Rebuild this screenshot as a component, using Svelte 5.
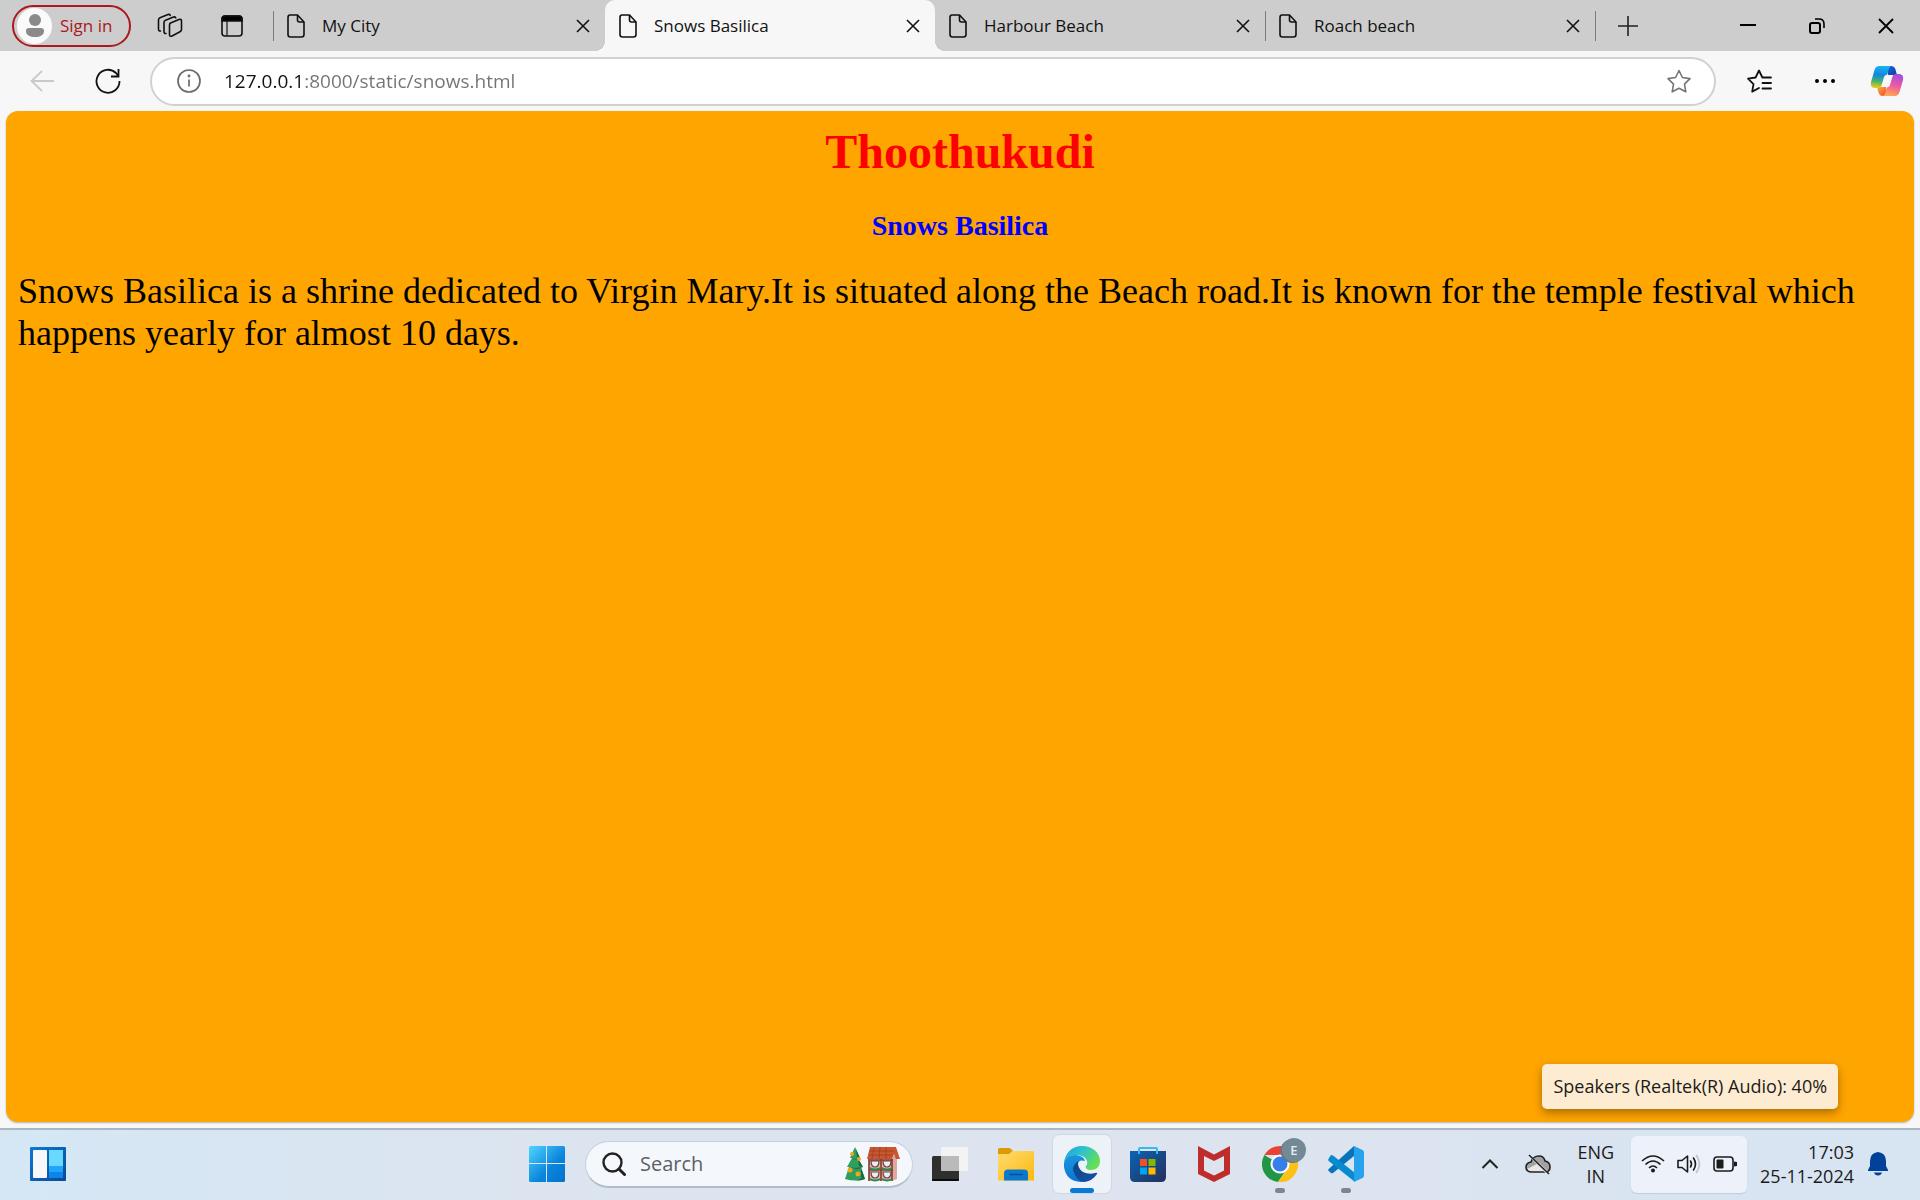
<script lang="ts">
  type Tab = { title: string; active?: boolean; ruled?: boolean };
  const tabs: Tab[] = [
    { title: 'My City', ruled: true },
    { title: 'Snows Basilica', active: true },
    { title: 'Harbour Beach' },
    { title: 'Roach beach', ruled: true },
  ];
  let url = $state('127.0.0.1:8000/static/snows.html');
  let query = $state('');
</script>

<div class="desktop">
  <header class="tabbar">
    <button class="signin">
      <span class="avatar">
        <svg width="20" height="24" viewBox="0 0 20 24" fill="#8a8a8a"><ellipse cx="10" cy="6" rx="6" ry="6" /><path d="M4 14h12c2 0 3 1 3 3 0 4-4 6-9 6s-9-2-9-6c0-2 1-3 3-3z" /></svg>
      </span>
      Sign in
    </button>
    <button class="tool workspaces" aria-label="Workspaces">
      <svg width="26" height="26" viewBox="0 0 26 26" fill="none" stroke="#111" stroke-width="1.6" stroke-linejoin="round" stroke-linecap="round">
        <path d="M13.500 10l8.500-3.500q2.500-.8 2.500 1.500v8.500q0 1.500-1.500 2.200l-8 4.300q-2.500 1-2.500-1.500v-9.500q0-1.400 1-2z" />
        <path d="M9 20.500q-2 .3-2-2v-9q0-1.500 1.500-2.200l8-3.300q1.500-.5 2.300.8" />
        <path d="M3.500 18q-2 .2-2-2V7q0-1.500 1.500-2.200l8-3.300q1.500-.5 2.300.8" />
      </svg>
    </button>
    <button class="tool" aria-label="Tab actions menu">
      <svg width="22" height="22" viewBox="0 0 22 22" fill="none" stroke="#111" stroke-width="1.6">
        <rect x="1" y="1" width="20" height="20" rx="3" /><path d="M1 6V4q0-3 3-3h14q3 0 3 3v2z" fill="#000" /><path d="M6 6v15" stroke-width="1.2" />
      </svg>
    </button>
    <nav class="tabs" aria-label="Tabs">
      {#each tabs as tab}
        <div class="tab" class:active={tab.active} class:ruled={tab.ruled}>
          <button class="tab-title">
            <svg width="18" height="24" viewBox="0 0 18 24" fill="none" stroke="#111" stroke-width="1.6" stroke-linejoin="round"><path d="M3 1h7.500l6.500 7v12.500q0 2.500-2.500 2.500H3.500Q1 23 1 20.500v-17Q1 1 3 1z" /><path d="M10.500 1v5q0 2 2 2H17" /></svg>
            <span>{tab.title}</span>
          </button>
          <button class="close" aria-label="Close {tab.title}">
            <svg width="14" height="14" viewBox="0 0 14 14" stroke="#111" stroke-width="1.6"><path d="M1 1l12 12M13 1L1 13" /></svg>
          </button>
        </div>
      {/each}
      <button class="newtab" aria-label="New tab">
        <svg width="22" height="22" viewBox="0 0 22 22" stroke="#222" stroke-width="1.6"><path d="M11 1v20M1 11h20" /></svg>
      </button>
    </nav>
    <div class="window-controls">
      <button aria-label="Minimize"><svg width="16" height="16" viewBox="0 0 16 16" stroke="#000" stroke-width="2"><path d="M0 7h16" /></svg></button>
      <button aria-label="Restore"><svg width="16" height="16" viewBox="0 0 16 16" fill="none" stroke="#000" stroke-width="2"><rect x="1" y="5" width="10" height="10" rx="2" /><path d="M6 1h4q5 0 5 5v4" stroke-width="1.6" /></svg></button>
      <button aria-label="Close"><svg width="16" height="16" viewBox="0 0 16 16" stroke="#000" stroke-width="1.8"><path d="M1 1l14 14M15 1L1 15" /></svg></button>
    </div>
  </header>

  <div class="toolbar">
    <button aria-label="Back"><svg width="24" height="22" viewBox="0 0 24 22" fill="none" stroke="#c9c9c9" stroke-width="1.8"><path d="M24 11H2M12 1L1.500 11 12 21" /></svg></button>
    <button aria-label="Refresh"><svg width="26" height="26" viewBox="0 0 26 26" fill="none" stroke="#111" stroke-width="1.800"><path d="M24.500 13A11.500 11.500 0 1 1 21 5l2 2.500M23.500 1v7.500h-7.500" /></svg></button>
    <div class="address">
      <svg width="24" height="24" viewBox="0 0 24 24" fill="none" stroke="#6b6b6b" stroke-width="1.7"><circle cx="12" cy="12" r="11" /><path d="M12 10.500v7" /><circle cx="12" cy="7" r=".6" fill="#6b6b6b" /></svg>
      <input type="text" aria-label="Address" bind:value={url} />
      <button aria-label="Add to favorites"><svg width="26" height="24" viewBox="0 0 26 24" fill="none" stroke="#767676" stroke-width="1.6" stroke-linejoin="round"><path d="M13 1.500l3.400 7 7.600 1.100-5.500 5.500 1.300 7.700-6.800-3.600-6.800 3.600 1.300-7.700L2 9.600l7.600-1.100z" /></svg></button>
    </div>
    <button aria-label="Favorites"><svg width="26" height="24" viewBox="0 0 26 24" fill="none" stroke="#111" stroke-width="1.8" stroke-linejoin="round" stroke-linecap="round"><path d="M13 19l-6.800 3.600 1.300-7.500L2 9.600l7.600-1.100 3.400-7 3.400 7M16.400 8.500H25M16.500 14H25M16.500 19.500H25" /></svg></button>
    <button aria-label="Settings and more"><svg width="22" height="6" viewBox="0 0 22 6"><circle cx="3" cy="3" r="2" /><circle cx="11" cy="3" r="2" /><circle cx="19" cy="3" r="2" /></svg></button>
    <button class="copilot" aria-label="Copilot">
      <svg width="34" height="32" viewBox="0 0 34 32">
        <defs>
          <linearGradient id="cpA" x1=".4" y1="0" x2=".3" y2="1"><stop offset="0" stop-color="#18b3f0" /><stop offset=".4" stop-color="#1686dd" /><stop offset=".7" stop-color="#46b36c" /><stop offset="1" stop-color="#f3cc16" /></linearGradient>
          <linearGradient id="cpB" x1=".7" y1="0" x2=".4" y2="1"><stop offset="0" stop-color="#a04be8" /><stop offset=".5" stop-color="#ee5aa0" /><stop offset="1" stop-color="#ffa552" /></linearGradient>
          <linearGradient id="cpC" x1="0" y1="0" x2="1" y2="1"><stop offset="0" stop-color="#1667d8" /><stop offset="1" stop-color="#123da8" /></linearGradient>
          <linearGradient id="cpD" x1="0" y1="0" x2="1" y2="1"><stop offset="0" stop-color="#ffb03a" /><stop offset="1" stop-color="#ee4432" /></linearGradient>
        </defs>
        <path d="M17 1h4q3.500 0 4.500 3.500L27 10h-9z" fill="url(#cpC)" />
        <path d="M17 31h-4q-3.500 0-4.500-3.500L7 22h9z" fill="url(#cpD)" />
        <path d="M9.500 1H22q-2.500 0-3.500 4l-1.300 4.500q-2.700.5-3.200 2.500l-2.500 8.500q-.6 2.500-4 2.500H5q-5 0-4-6L4.500 5q1-4 5-4z" fill="url(#cpA)" />
        <path d="M24.500 31H12q2.500 0 3.500-4l1.300-4.500q2.700-.5 3.200-2.500l2.500-8.500q.6-2.500 4-2.500H29q5 0 4 6l-3.500 12q-1 4-5 4z" fill="url(#cpB)" />
      </svg>
    </button>
  </div>

  <main class="page">
    <h1>Thoothukudi</h1>
    <h2>Snows Basilica</h2>
    <p>Snows Basilica is a shrine dedicated to Virgin Mary.It is situated along the Beach road.It is known for the temple festival which happens yearly for almost 10 days.</p>
  </main>

  <footer class="taskbar">
    <div class="widgets">
      <button aria-label="Widgets">
        <svg width="36" height="34" viewBox="0 0 36 34">
          <defs><linearGradient id="wd" x1="0" y1="0" x2="1" y2="1"><stop offset="0" stop-color="#0a7ad6" /><stop offset="1" stop-color="#0b4a92" /></linearGradient></defs>
          <rect width="36" height="34" rx="1" fill="url(#wd)" /><rect x="3" y="3" width="14" height="28" rx="1" fill="#f8f8f8" /><rect x="19" y="3" width="14" height="16" fill="#68d9ff" /><rect x="19" y="19" width="14" height="6" fill="#1fa6fb" /><rect x="19" y="25" width="14" height="6" fill="#0a86ea" />
        </svg>
      </button>
    </div>

    <div class="apps">
      <button class="app start" aria-label="Start">
        <svg width="36" height="36" viewBox="0 0 36 36">
          <defs><linearGradient id="win" x1="0" y1="0" x2="36" y2="36" gradientUnits="userSpaceOnUse"><stop offset="0" stop-color="#50d5ff" /><stop offset=".6" stop-color="#0a85dc" /><stop offset="1" stop-color="#0273cd" /></linearGradient></defs>
          <path fill="url(#win)" d="M1.500 0H17v17H0V1.500Q0 0 1.500 0zM18 0h16.500Q36 0 36 1.500V17H18zM0 18h17v18H1.500Q0 36 0 34.500zM18 18h18v16.500q0 1.500-1.500 1.500H18z" />
        </svg>
      </button>
      <label class="search">
        <svg width="24" height="24" viewBox="0 0 24 24" fill="none" stroke="#222" stroke-width="2.4" stroke-linecap="round"><circle cx="10.500" cy="10.500" r="9" /><path d="M17 17l5.500 5.500" stroke-width="3" /></svg>
        <input type="search" placeholder="Search" aria-label="Search" bind:value={query} />
        <svg width="56" height="36" viewBox="0 0 56 36">
          <path d="M11 1l5 11h-2l5 9h-2l4 12q-10 3-20 0l4-12H3l5-9H6z" fill="#2f9e5f" />
          <path d="M16 12q-4 3-8 0l3 1zM19 21q-6 4-12 0l4 1zM21 33q-5 2-10 1.500 6-1 8-4zM12 3l4 9-3-1zM14 13l5 8-4-1zM17 22l4 11-4-2z" fill="#176a43" />
          <g fill="#f2a51e"><circle cx="8" cy="8" r="2" /><circle cx="15" cy="13" r="2" /><circle cx="6" cy="24" r="2.500" /><circle cx="14" cy="28" r="2.500" /></g>
          <path d="M48 12l5-7v28l-5 2z" fill="#d8aaa0" /><path d="M25 12h24v23H25z" fill="#dcb8ad" />
          <path d="M25 13v22M37 13v22M48 13v22M25 24h24M25 14h24" stroke="#85382c" stroke-width="1.6" />
          <path d="M26 1h26l4 12h-4l-2-5-2 5H23z" fill="#c65730" /><path d="M26 5h24M25 9h24M30 1l-2 12M36 1l-1 12M42 1v12" stroke="#a13e22" stroke-width=".8" />
          <g fill="#e2eeff" stroke="#7c3a32" stroke-width="1.2"><path d="M27 15h8q0 6-4 6t-4-6zM39 15h8q0 6-4 6t-4-6zM27 26h8q0 6-4 6t-4-6zM39 26h8q0 6-4 6t-4-6z" /></g>
          <path d="M26 22q5 3 10 0M38 22q5 3 10 0M26 33q5 3 10 0M38 33q5 3 10 0" stroke="#278b4a" stroke-width="2" fill="none" />
        </svg>
      </label>
      <button class="app" aria-label="Task view">
        <svg width="36" height="36" viewBox="0 0 36 36"><rect x="0" y="10" width="27" height="25" rx="1.500" fill="#2f2f2f" /><path d="M0 34h27" stroke="#000" stroke-width="1.5" /><rect x="9" y="1" width="27" height="24" rx="1.500" fill="#f3f3f3" /><path d="M9 10h18v15H10.500Q9 25 9 23.500z" fill="#bababa" /></svg>
      </button>
      <button class="app" aria-label="File Explorer">
        <svg width="36" height="36" viewBox="0 0 36 36">
          <defs><linearGradient id="fo" x1="0" y1="0" x2="1" y2="1"><stop offset="0" stop-color="#ffdc70" /><stop offset="1" stop-color="#fbb90f" /></linearGradient></defs>
          <path d="M1.500 2H11q1.500 0 4 3v3H0V3.500Q0 2 1.500 2z" fill="#dd9a04" /><path d="M0 8h11l3.500-3H34.500Q36 5 36 6.500V34.500H0z" fill="url(#fo)" /><path d="M6 34.500V27q0-3.500 4-3.500h16q4 0 4 3.500v7.500z" fill="#0b78cc" /><path d="M12 28.500h12" stroke="#084f91" stroke-width="1.6" stroke-linecap="round" />
        </svg>
      </button>
      <button class="app current" aria-label="Microsoft Edge">
        <svg width="36" height="36" viewBox="0 0 36 36">
          <defs>
            <linearGradient id="edTop" x1="0" y1="0" x2="1" y2=".5"><stop offset="0" stop-color="#1b9de2" /><stop offset=".5" stop-color="#2dc3cc" /><stop offset="1" stop-color="#65df55" /></linearGradient>
            <linearGradient id="edLeft" x1=".3" y1="0" x2=".5" y2="1"><stop offset="0" stop-color="#1b95dc" /><stop offset="1" stop-color="#0872d5" /></linearGradient>
            <linearGradient id="edLow" x1="0" y1="0" x2="1" y2="1"><stop offset="0" stop-color="#0e4584" /><stop offset="1" stop-color="#1253a8" /></linearGradient>
          </defs>
          <path d="M0 17Q2 8 12 9q8 1 9 6-7-2-7 4 1 12 17 10Q26 36 17 36 2 35 0 21z" fill="url(#edLeft)" />
          <path d="M0 17C1 7 8 0 18 0c11 0 18 7 18 15 0 6-4 9-9 9-4 0-6-2-5-4q2-2 1-5-2-6-11-6-9 0-12 8z" fill="url(#edTop)" />
          <path d="M14 15q-8 6-3 14 3 6 9 7 8-.5 13-8 1-2-2-1-6 2-12-1-6-4-5-11z" fill="url(#edLow)" />
        </svg>
      </button>
      <button class="app" aria-label="Microsoft Store">
        <svg width="36" height="36" viewBox="0 0 36 36">
          <defs><linearGradient id="st" x1="0" y1="0" x2="1" y2="1"><stop offset="0" stop-color="#0b64b5" /><stop offset="1" stop-color="#252f5a" /></linearGradient></defs>
          <path d="M0 5h36v26q0 5-5 5H5q-5 0-5-5z" fill="url(#st)" /><path d="M9 8V3q0-1 1-1h16q1 0 1 1v5" fill="none" stroke="#31bdf1" stroke-width="2" /><path fill="#f25022" d="M10 13h7v7h-7z" /><path fill="#7fba00" d="M18.500 13h7v7h-7z" /><path fill="#00a4ef" d="M10 21.500h7v7h-7z" /><path fill="#ffb900" d="M18.500 21.500h7v7h-7z" />
        </svg>
      </button>
      <button class="app" aria-label="McAfee">
        <svg width="36" height="36" viewBox="0 0 36 36"><path d="M2 0l16 8.500L34 0v28l-16 8-16-8zM8 10v14.500l10 5 10-5V10l-10 5z" fill="#be2d2c" /></svg>
      </button>
      <button class="app open" aria-label="Google Chrome">
        <svg class="badged" width="44" height="44" viewBox="0 0 44 44">
          <path d="M2.400 17A18 18 0 0 1 33.600 17H18z" fill="#ea4335" /><path d="M2.400 17a18 18 0 0 0 13.600 27l9.800-14.500L18 26z" fill="#219746" /><path d="M33.600 17A18 18 0 0 1 16 44l9.800-13.500L18 17z" fill="#fbc116" /><circle cx="18" cy="26" r="9.500" fill="#fff" /><circle cx="18" cy="26" r="7.500" fill="#377ee8" />
          <circle cx="30.500" cy="13" r="12" fill="#607785" /><circle cx="32" cy="12" r="12" fill="#738996" /><text x="32" y="17" text-anchor="middle" font-family="Open Sans" font-size="13" font-weight="600" fill="#e5edf1">E</text>
        </svg>
      </button>
      <button class="app open" aria-label="Visual Studio Code">
        <svg width="36" height="36" viewBox="0 0 36 36"><path d="M26 0v10L5 27q-1 .5-2 0L.7 25q-1-1 0-2z" fill="#0874b9" /><path d="M.7 12.500L2.500 9.500q1-1 2.500 0L27 27v9L.7 15q-1-1 0-2.500z" fill="#078bd0" /><path d="M26 0l8.500 4Q36 4.700 36 6.500v23q0 1.800-1.500 2.500L26 36z" fill="#27a2ed" /></svg>
      </button>
    </div>

    <div class="tray">
      <button class="more" aria-label="Show hidden icons"><svg width="18" height="12" viewBox="0 0 18 12" fill="none" stroke="#222" stroke-width="2"><path d="M1.500 10L9 2.500l7.500 7.500" /></svg></button>
      <button aria-label="OneDrive"><svg width="26" height="22" viewBox="0 0 26 22"><path d="M7 19q-6 0-6-5 0-4 5-5 2-6 8-6 5 0 6 5 5 1 5 6t-5 5z" fill="#a2a2a2" /><path d="M2 16l12-6 9 8q-1 1-3 1H7q-4 0-5-3z" fill="#e8e8e8" /><path d="M7 19q-6 0-6-5 0-4 5-5 2-6 8-6 5 0 6 5 5 1 5 6t-5 5z" fill="none" stroke="#222" stroke-width="1.6" /><path d="M5 3l19 19" stroke="#dce4ee" stroke-width="2" /><path d="M4 2l20 19" stroke="#222" stroke-width="1.6" /></svg></button>
      <button class="lang"><span>ENG</span><span>IN</span></button>
      <div class="quick">
        <button class="quick-button" aria-label="Network, volume and battery" aria-describedby="volume-tip">
          <svg width="24" height="18" viewBox="0 0 24 18" fill="none" stroke="#1b1b1b" stroke-width="1.6"><path d="M1 6q11-10 22 0M4.500 9.500q7.500-7 15 0M8 13q4-4 8 0" /><circle cx="12" cy="15.500" r="2" fill="#1b1b1b" stroke="none" /></svg>
          <svg width="24" height="20" viewBox="0 0 24 20" fill="none" stroke="#1b1b1b" stroke-width="1.6" stroke-linejoin="round" stroke-linecap="round"><path d="M1 6.500h4L10.500 2v16L5 13.500H1zM13.500 7q2 3 0 6M16.500 4q4 6 0 12" /><path d="M19.500 1.500q6 8.500 0 17" stroke="#bdc2ca" /></svg>
          <svg width="24" height="16" viewBox="0 0 24 16" fill="none" stroke="#1b1b1b" stroke-width="1.6"><rect x="1" y="1" width="19" height="14" rx="3" /><rect x="3.500" y="3.500" width="7" height="9" rx="1" fill="#1b1b1b" stroke="none" /><path d="M21 5.500l3 .5v4l-3 .5z" fill="#1b1b1b" stroke="none" /></svg>
        </button>
        <div class="tooltip" role="tooltip" id="volume-tip">Speakers (Realtek(R) Audio): 40%</div>
      </div>
      <button class="clock"><span>17:03</span><span>25-11-2024</span></button>
      <button aria-label="Notifications"><svg width="20" height="24" viewBox="0 0 20 24" fill="#00419a"><path d="M2 9q0-8 8-9 8 1 8 9v5l2 4v1H0v-1l2-4zM6 20.500h8q-1 3-4 3t-4-3z" /></svg></button>
    </div>
  </footer>
</div>

<style>
  :global(body) { margin: 0; }
  * { box-sizing: border-box; }
  button, input { font: inherit; color: inherit; border: 0; padding: 0; margin: 0; background: none; }
  button { display: flex; align-items: center; justify-content: center; flex: none; cursor: pointer; }
  svg { display: block; flex: none; }
  .desktop { min-height: 100vh; display: flex; flex-direction: column; background: #f7f7f7; color: #1b1b1b; font: 17px/24px 'Open Sans', 'Noto Sans', sans-serif; }

  .tabbar { display: flex; align-items: center; height: 51px; padding-left: 12px; background: #cdcdcd; }
  .signin { width: 119px; height: 42px; padding: 0 0 0 3px; gap: 8px; justify-content: flex-start; border: 2px solid #a9191d; border-radius: 21px; color: #a9191d; white-space: nowrap; }
  .avatar { display: grid; place-items: center; width: 35px; height: 36px; border-radius: 50%; background: #fafafa; flex: none; }
  .tool { width: 62px; height: 42px; }
  .workspaces { margin-left: 8px; }
  .tabs { display: flex; flex: 1; align-self: stretch; min-width: 0; margin-left: 10px; }
  .tab { position: relative; flex: 0 1 330px; min-width: 0; display: flex; align-items: center; padding: 0 15px 0 14px; color: #111; }
  .tab:first-child { flex-basis: 332px; }
  .tab-title { flex: 1; min-width: 0; height: 40px; gap: 17px; justify-content: flex-start; white-space: nowrap; overflow: hidden; }
  .close { width: 14px; height: 40px; }
  .tab.ruled::before, .newtab::before { content: ''; position: absolute; left: 0; top: 11px; width: 1px; height: 30px; background: #7d7d7d; }
  .tab.active { background: #f7f7f7; border-radius: 10px 10px 0 0; }
  .tab.active::before, .tab.active::after { content: ''; position: absolute; bottom: 0; width: 10px; height: 10px; }
  .tab.active::before { right: 100%; background: radial-gradient(circle at 0 0, transparent 10px, #f7f7f7 10px); }
  .tab.active::after { left: 100%; background: radial-gradient(circle at 100% 0, transparent 10px, #f7f7f7 10px); }
  .newtab { position: relative; width: 66px; }
  .window-controls { display: flex; align-self: stretch; }
  .window-controls button { width: 69px; }

  .toolbar { display: flex; align-items: center; height: 60px; padding: 0 12px 0 9px; }
  .toolbar > button { width: 66px; height: 48px; }
  .toolbar > .copilot { width: 50px; justify-content: flex-end; padding-right: 4px; }
  .address { flex: 1; min-width: 0; display: flex; align-items: center; gap: 23px; height: 49px; margin: 0 10px 0 9px; padding: 0 22px 0 25px; border: 2px solid #d1d1d1; border-radius: 25px; background: #fff; }
  .address input { flex: 1; min-width: 0; height: 32px; font-size: 19px; outline: 0; color: transparent; caret-color: #111; background: linear-gradient(90deg, #111 81px, #737373 81px); background-clip: text; -webkit-background-clip: text; }

  .page { flex: 1; margin: 0 6px 6px; padding: 13px 12px; border-radius: 12px; background: #ffa500; color: #000; font: 36px/42px 'Liberation Serif', 'Times New Roman', serif; box-shadow: 0 1px 2px #0004; }
  h1, h2 { margin: 0; text-align: center; }
  h1 { color: #f00; font-size: 48px; line-height: 56px; }
  h2 { margin-top: 30px; color: #00f; font-size: 28px; line-height: 32px; }
  p { margin: 28px 0 0; }

  .taskbar { display: grid; grid-template-columns: 1fr auto 1fr; align-items: center; height: 72px; padding-bottom: 2px; border-top: 2px solid #abb6c3; background: linear-gradient(90deg, #d5e7f5, #dce4ef 30%, #dde4ef 60%, #d7e4f2); }
  .widgets { padding-left: 30px; display: flex; }
  .apps { display: flex; align-items: center; padding-right: 27px; }
  .app { position: relative; width: 58px; height: 58px; margin: 0 4px; border-radius: 6px; }
  .start { margin-right: 9px; }
  .badged { margin: -8px -8px 0 0; }
  .current { background: #edf2f9; box-shadow: 0 0 0 1px #ced8e4; }
  .current::after, .open::after { content: ''; position: absolute; bottom: 0; left: 50%; translate: -50% 0; height: 5px; border-radius: 3px; }
  .current::after { width: 24px; background: #0879d4; }
  .open::after { width: 10px; background: #7e858d; }
  .search { display: flex; align-items: center; gap: 14px; width: 328px; height: 47px; margin-right: 4px; padding: 0 12px 0 16px; border: 1px solid #c5d0dd; border-bottom: 2px solid #b1bdca; border-radius: 24px; background: #f4f8fc; }
  .search input { flex: 1; min-width: 0; height: 32px; font-size: 20px; outline: 0; appearance: none; }
  .search input::placeholder { color: #5d6064; opacity: 1; }

  .tray { display: flex; align-items: center; justify-content: flex-end; padding-right: 32px; font-size: 18px; }
  .more { margin-right: 26px; }
  .lang, .clock { flex-direction: column; }
  .lang { margin: 0 17px 0 26px; }
  .quick { position: relative; }
  .quick-button { gap: 12px; width: 116px; height: 57px; border-radius: 6px; background: #edf2fa; box-shadow: 0 1px 1px #bfcbd9; }
  .clock { align-items: flex-end; margin: 0 14px 0 13px; }
  .tooltip { position: absolute; right: -91px; bottom: calc(100% + 27px); padding: 10px 11px 11px; border-radius: 5px; background: #fdecd1; white-space: nowrap; box-shadow: 0 4px 10px #0005; }
</style>
